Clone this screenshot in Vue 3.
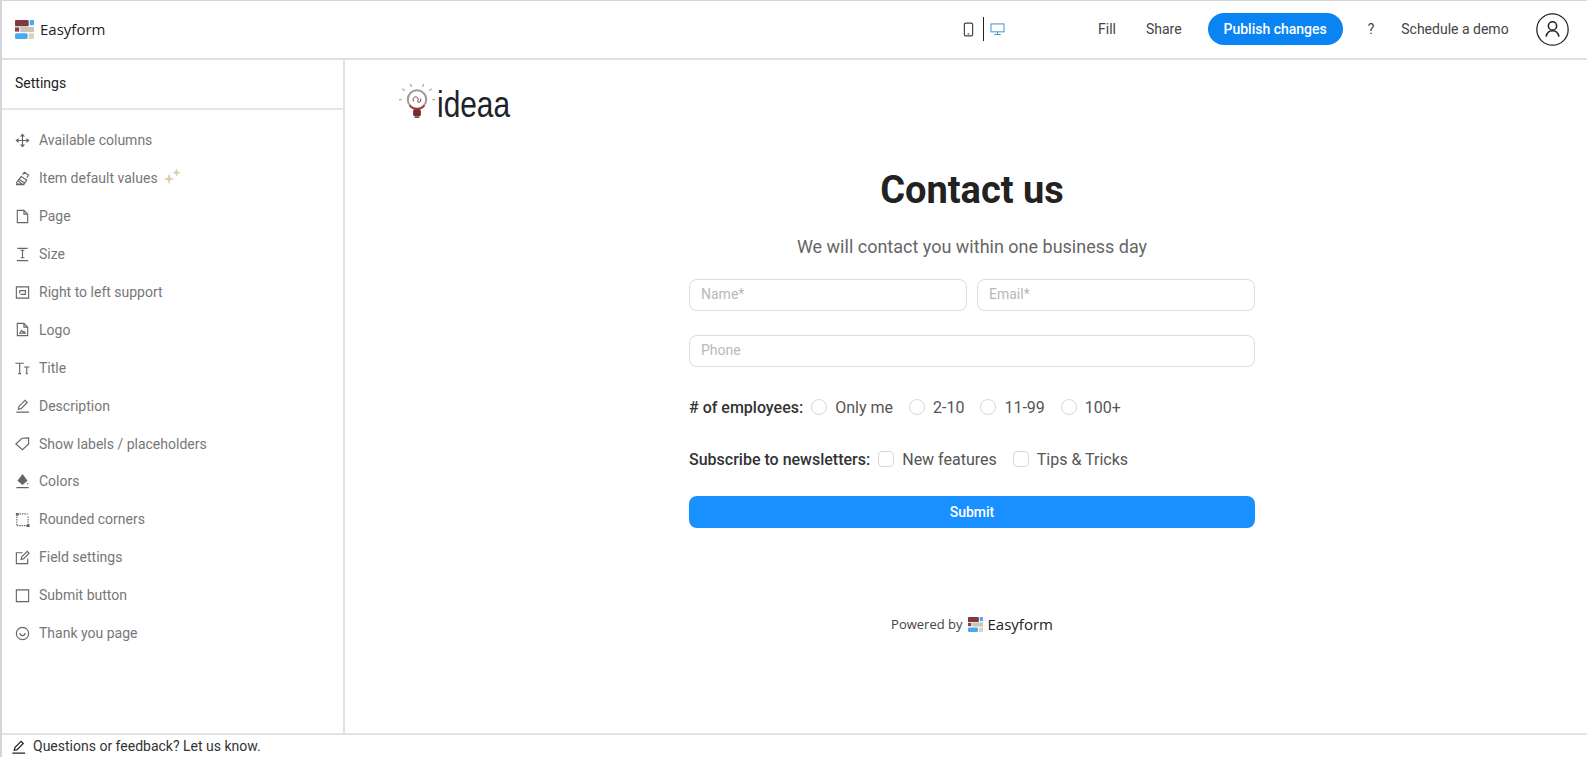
<script setup>
const items = [
  { label: 'Available columns', icon: 'move' },
  { label: 'Item default values', icon: 'fill', spark: true },
  { label: 'Page', icon: 'page' },
  { label: 'Size', icon: 'size' },
  { label: 'Right to left support', icon: 'rtl' },
  { label: 'Logo', icon: 'logo' },
  { label: 'Title', icon: 'title' },
  { label: 'Description', icon: 'pen' },
  { label: 'Show labels / placeholders', icon: 'tag' },
  { label: 'Colors', icon: 'colors' },
  { label: 'Rounded corners', icon: 'corners' },
  { label: 'Field settings', icon: 'edit' },
  { label: 'Submit button', icon: 'square' },
  { label: 'Thank you page', icon: 'smile' }
]
const icons = {
  move: 'M9 3v12M3 9h12M9 2.500 7.600 4.200h2.800zM9 15.500 7.600 13.800h2.800zM2.500 9l1.700-1.400v2.800zM15.500 9l-1.700-1.400v2.800z',
  fill: 'M2.500 13.500 7.500 7l6 3.500-3 4.500H4zM5.500 10l5.500 3.500M4.500 11.500l3.500 3M9 5l2-2.500 4.500 3-2 2.500M2 15.500h9',
  page: 'M3.500 2.500h7l4 4v9h-11zM10.500 2.500v4h4',
  size: 'M3.500 2.500h11M3 15.500h12M9 4.500v8M7 4.500h4M7 12.500h4',
  rtl: 'M2.500 3h13v12h-13zM6 7h6v4H7M6 7v3',
  logo: 'M3.500 2.500h7l4 4v9h-11zM10.500 2.500v4h4M6 13l2-3 1.500 2 1-1 1.500 2z',
  title: 'M1.500 4.500h9M6 4.500V15.500M4.500 15.500h3M10.500 8.500h6M13.500 8.500v7M12.500 15.500h2',
  pen: 'M2.500 16h13.500M4.500 13l.7-3 6.500-6.500 2.300 2.300L7.500 12.300z',
  tag: 'M2 9.500 8.500 3.500l7-.5v6.500l-6.500 6zM12.500 5.600v.1',
  colors: 'M9 2 13.500 8 9 12 4.500 8zM14.500 10.500v1.500M2.500 15.500h13',
  corners: 'M6 3h8.500M15 6v9.500M3 6v9.500M3 15.500h12',
  edit: 'M14.500 10v5.500h-12V4h6.500M7.500 11l.5-2.500 6-6 2 2-6 6z',
  square: 'M2.500 3h13v12.500h-13z',
  smile: 'M9 2.500a6.500 6.500 0 1 0 0 13 6.500 6.500 0 0 0 0-13zM6.300 8.500a2.700 2.700 0 0 0 5.400 0'
}
const employees = ['Only me', '2-10', '11-99', '100+']
const newsletters = ['New features', 'Tips & Tricks']
</script>

<template>
  <div class="app">
    <header class="top">
      <div class="brand">
        <svg class="mark" viewBox="0 0 18 18" width="19" height="19" aria-hidden="true">
          <rect x="0" y="0" width="13" height="6" rx="1" fill="#7d3a40" />
          <rect x="14" y="0" width="4" height="5" rx="1" fill="#45aaee" />
          <rect x="0" y="7" width="4" height="4" fill="#8f3f45" />
          <rect x="5" y="6.500" width="13" height="5" fill="#c9c5b8" />
          <rect x="0" y="12.500" width="12" height="5.500" rx="1.500" fill="#4aa8ee" />
          <rect x="13" y="12.500" width="5" height="5.500" rx="1" fill="#d9d3c0" />
        </svg>
        <span class="brand-name">Easyform</span>
      </div>
      <div class="devices">
        <svg viewBox="0 0 12 16" width="11" height="15" fill="none" stroke="#444" stroke-width="1.300" aria-hidden="true">
          <rect x="1.500" y="1" width="9" height="14" rx="1.500" />
          <path d="M5 12.800h2" />
        </svg>
        <span class="divider"></span>
        <svg viewBox="0 0 16 14" width="15" height="13" fill="none" stroke="#3d9bd6" stroke-width="1.100" aria-hidden="true">
          <rect x="1" y="1" width="14" height="8.500" />
          <path d="M8 9.500v2.500M4.500 12.500h7" />
        </svg>
      </div>
      <nav class="nav">
        <span class="fill-link">Fill</span>
        <span class="share">Share</span>
        <button class="publish">Publish changes</button>
        <span class="help">?</span>
        <span class="demo">Schedule a demo</span>
        <svg class="avatar" viewBox="0 0 32 32" width="33" height="33" fill="none" stroke="#222" stroke-width="1.200" aria-hidden="true">
          <circle cx="16" cy="16" r="15.200" />
          <circle cx="16" cy="12.500" r="4" stroke-width="1.500" />
          <path d="M9.800 23c.6-3.800 3-5.800 6.200-5.800s5.600 2 6.200 5.800" stroke-width="1.500" />
        </svg>
      </nav>
    </header>

    <div class="body">
      <aside class="side">
        <div class="side-title">Settings</div>
        <ul class="menu">
          <li v-for="item in items" :key="item.label" class="menu-item">
            <svg class="menu-icon" :class="{ dashed: item.icon === 'corners', solid: item.icon === 'colors' }" viewBox="0 0 18 18" width="17" height="17" fill="none" stroke="#666" stroke-width="1.200" aria-hidden="true">
              <path :d="icons[item.icon]" />
              <path v-if="item.icon === 'corners'" class="corner-dots" d="M2 2h3v3H2zM13.500 14h3v3h-3z" />
            </svg>
            <span>{{ item.label }}</span>
            <svg v-if="item.spark" class="spark" viewBox="0 0 18 18" width="18" height="18" fill="#ddcda8" aria-hidden="true">
              <path d="M6 5.500 7.300 9.700 11.500 11 7.300 12.300 6 16.500 4.700 12.300.5 11 4.700 9.700zM13.500 .5l1.100 3.100 3.100 1.100-3.100 1.100-1.100 3.100-1.100-3.100-3.100-1.100 3.100-1.100z" />
            </svg>
          </li>
        </ul>
      </aside>

      <main class="main">
        <div class="logo">
          <svg viewBox="0 0 40 42" width="39" height="41" fill="none" aria-hidden="true">
            <g stroke="#c9a48e" stroke-width="1.300">
              <path d="M4 18H1M7 9 4.500 7M14 5l-1.500-3M25 5l1.500-3M32 9l2.500-2M35 18h3" />
            </g>
            <circle cx="19.500" cy="18" r="9.500" stroke="#9b9b9b" stroke-width="2" />
            <path d="M12 24a9.500 9.500 0 0 0 15 0" stroke="#a33a3a" stroke-width="2" />
            <path d="M16 20c-2-4 2-6 4-4s-1 5 1 5 3-2 2-4" stroke="#7d3a40" stroke-width="1" />
            <rect x="15.500" y="28" width="8" height="7" rx="2" fill="#7d2a2e" />
            <path d="M17 36h5" stroke="#444" stroke-width="1.500" />
          </svg>
          <span class="logo-word">ideaa</span>
        </div>

        <section class="form">
          <h1>Contact us</h1>
          <p class="lead">We will contact you within one business day</p>
          <div class="two">
            <div class="input">Name*</div>
            <div class="input">Email*</div>
          </div>
          <div class="input phone">Phone</div>
          <div class="choice employees">
            <span class="choice-label"># of employees:</span>
            <span v-for="opt in employees" :key="opt" class="opt">
              <i class="radio"></i>{{ opt }}
            </span>
          </div>
          <div class="choice news">
            <span class="choice-label">Subscribe to newsletters:</span>
            <span v-for="opt in newsletters" :key="opt" class="opt">
              <i class="check"></i>{{ opt }}
            </span>
          </div>
          <button class="submit">Submit</button>
          <div class="powered">
            <span>Powered by</span>
            <svg viewBox="0 0 18 18" width="15" height="15" aria-hidden="true">
              <rect x="0" y="0" width="13" height="6" rx="1" fill="#7d3a40" />
              <rect x="14" y="0" width="4" height="5" rx="1" fill="#45aaee" />
              <rect x="0" y="7" width="4" height="4" fill="#8f3f45" />
              <rect x="5" y="6.500" width="13" height="5" fill="#c9c5b8" />
              <rect x="0" y="12.500" width="12" height="5.500" rx="1.500" fill="#4aa8ee" />
              <rect x="13" y="12.500" width="5" height="5.500" rx="1" fill="#d9d3c0" />
            </svg>
            <strong>Easyform</strong>
          </div>
        </section>
      </main>
    </div>

    <footer class="foot">
      <svg viewBox="0 0 18 18" width="17" height="17" fill="none" stroke="#222" stroke-width="1.300" aria-hidden="true">
        <path :d="icons.pen" />
      </svg>
      <span>Questions or feedback? Let us know.</span>
    </footer>
  </div>
</template>

<style>
html, body { margin: 0; background: #fff; overflow: hidden; }
</style>

<style scoped>
.app {
  box-sizing: border-box;
  width: 1587px;
  height: 757px;
  display: flex;
  flex-direction: column;
  border-top: 1px solid #d3d5da;
  border-left: 2px solid #d3d5da;
  font-family: Roboto, "Liberation Sans", sans-serif;
  background: #fff;
  color: #222;
  overflow: hidden;
}
.top {
  height: 57px;
  flex: none;
  display: flex;
  align-items: center;
  border-bottom: 2px solid #dedfe2;
  box-sizing: content-box;
  position: relative;
}
.brand {
  display: flex;
  align-items: center;
  gap: 6px;
  padding-left: 13px;
  width: 925px;
  margin-bottom: 1px;
}
.brand-name {
  font-family: "Open Sans", sans-serif;
  font-size: 15px;
  font-weight: 500;
  color: #222;
}
.devices {
  display: flex;
  align-items: center;
  gap: 6px;
  width: 135px;
  margin-left: 23px;
  margin-bottom: 1px;
}
.divider {
  width: 1px;
  height: 24px;
  margin-left: 3px;
  background: #222;
}
.nav {
  display: flex;
  align-items: center;
  font-size: 14px;
  color: #444;
  margin-bottom: 1px;
}
.fill-link { margin-left: 0; }
.share { margin-left: 30px; }
.publish {
  margin-left: 26px;
  width: 135px;
  height: 32px;
  border: 0;
  border-radius: 16px;
  background: #0b84f3;
  color: #fff;
  font: 500 14px Roboto, sans-serif;
  padding: 0;
}
.help { margin-left: 25px; }
.demo { margin-left: 27px; }
.avatar { margin-left: 27px; }
.body {
  flex: 1;
  min-height: 0;
  display: flex;
}
.side {
  width: 343px;
  flex: none;
  box-sizing: border-box;
  border-right: 2px solid #e2e3e6;
}
.side-title {
  height: 50px;
  box-sizing: border-box;
  padding: 15px 0 0 13px;
  font-size: 14px;
  font-weight: 400;
  color: #222;
  border-bottom: 2px solid #e4e5e8;
}
.menu {
  list-style: none;
  margin: 0;
  padding: 11.5px 0 0;
}
.menu-item {
  height: 37.9px;
  display: flex;
  align-items: center;
  padding-left: 12px;
  font-size: 14px;
  color: #777;
}
.menu-icon {
  margin-right: 8px;
  flex: none;
}
.dashed path { stroke-dasharray: 1.500 1; }
.dashed .corner-dots { stroke-dasharray: none; stroke: none; fill: #666; }
.solid path { fill: #666; }
.spark { margin-left: 5px; margin-top: -3px; }
.main {
  flex: 1;
  min-width: 0;
  position: relative;
}
.logo {
  display: flex;
  align-items: flex-start;
  position: absolute;
  left: 53px;
  top: 22px;
}
.logo-word {
  display: block;
  margin-top: 3px;
  font: 400 36px/40px "Liberation Sans", sans-serif;
  color: #20222a;
  transform: scaleX(0.83);
  transform-origin: left center;
}
.form {
  width: 566px;
  margin-left: 344px;
  padding-top: 108px;
  display: flex;
  flex-direction: column;
}
h1 {
  margin: 0;
  text-align: center;
  font-size: 38px;
  line-height: 44px;
  font-weight: 700;
  color: #222;
}
.lead {
  margin: 23px 0 0;
  text-align: center;
  font-size: 18px;
  line-height: 24px;
  color: #666;
}
.two {
  display: grid;
  grid-template-columns: 278px 278px;
  gap: 10px;
  margin-top: 20px;
}
.input {
  height: 32px;
  box-sizing: border-box;
  border: 1px solid #dcdde0;
  border-radius: 8px;
  padding: 0 11px 2px;
  display: flex;
  align-items: center;
  font-size: 14px;
  color: #b9b9b9;
}
.phone { margin-top: 24px; }
.choice {
  display: flex;
  align-items: center;
  height: 24px;
  font-size: 16px;
  color: #555;
}
.choice-label { color: #333; font-size: 16px; font-weight: 500; }
.employees { margin-top: 28px; }
.news { margin-top: 28px; }
.opt {
  display: flex;
  align-items: center;
  margin-left: 8px;
  margin-right: 8px;
  white-space: nowrap;
}
.radio {
  width: 16px;
  height: 16px;
  box-sizing: border-box;
  border: 1px solid #d9d9d9;
  border-radius: 50%;
  margin-right: 8px;
}
.check {
  width: 16px;
  height: 16px;
  box-sizing: border-box;
  border: 1px solid #d9d9d9;
  border-radius: 4px;
  margin-right: 8px;
}
.submit {
  height: 32px;
  margin-top: 25px;
  border: 0;
  border-radius: 8px;
  background: #1890ff;
  color: #fff;
  font: 500 14px Roboto, sans-serif;
  padding: 0 0 1px;
}
.powered {
  margin-top: 86px;
  display: flex;
  justify-content: center;
  align-items: center;
  gap: 5px;
  font-family: "Open Sans", sans-serif;
  font-size: 13px;
  color: #444;
}
.powered strong {
  font-size: 15px;
  font-weight: 500;
  color: #222;
}
.foot {
  height: 22px;
  flex: none;
  border-top: 2px solid #e2e3e6;
  display: flex;
  align-items: center;
  gap: 6px;
  padding-left: 8px;
  font-size: 14px;
  color: #333;
}
</style>
